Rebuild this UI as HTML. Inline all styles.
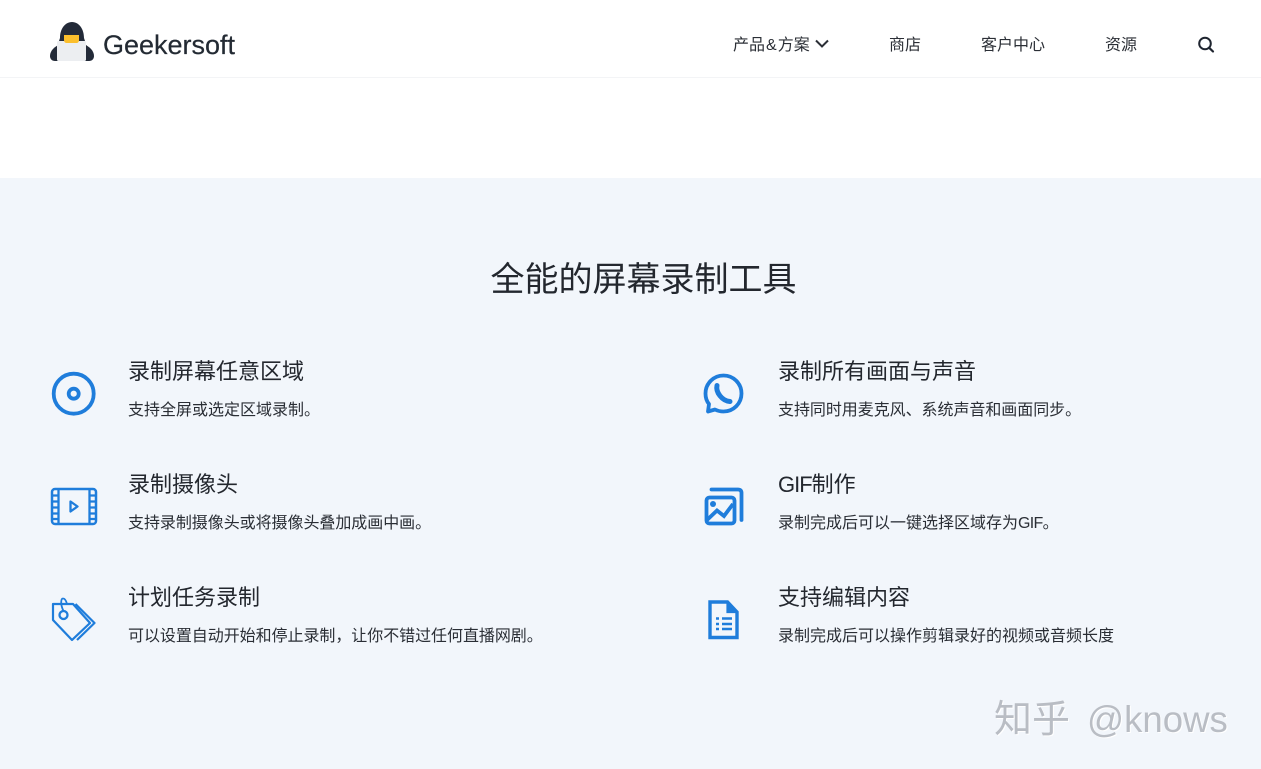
<!DOCTYPE html>
<html lang="zh-CN">
<head>
<meta charset="utf-8">
<title>Geekersoft</title>
<style>
html,body{margin:0;padding:0;background:#fff}
#p{position:relative;width:1261px;height:769px;overflow:hidden;background:#fff;font-family:"Liberation Sans","Noto Sans CJK SC",sans-serif;color:#222730}
.t{position:absolute;white-space:nowrap;line-height:1}
.h{position:absolute;left:0;top:77px;width:1261px;height:1px;background:#f3f4f6}
.bg{position:absolute;left:0;top:178px;width:1261px;height:591px;background:#f2f6fb}
.n{font-size:16px;color:#2b2f36;top:38px}
.a{font-size:22px;color:#23272e}
.d{font-size:16px;color:#2a2e35}
.g{letter-spacing:-.7px}
svg{position:absolute;left:0;top:0}
</style>
</head>
<body>
<div id="p">
<div class="h"></div>
<div class="bg"></div>

<div class="t" style="left:103px;top:32px;font-size:27px;color:#232a33;-webkit-text-stroke:.2px #232a33">Geekersoft</div>
<div class="t n" style="left:733px">产品<span style="padding:0 1px">&amp;</span>方案</div>
<div class="t n" style="left:889px">商店</div>
<div class="t n" style="left:981px">客户中心</div>
<div class="t n" style="left:1105px">资源</div>

<div class="t" style="left:490.5px;top:263px;font-size:34px;color:#23272e">全能的屏幕录制工具</div>

<div class="t a" style="left:128px;top:361px">录制屏幕任意区域</div>
<div class="t d" style="left:128px;top:403px">支持全屏或选定区域录制。</div>
<div class="t a" style="left:128px;top:474px">录制摄像头</div>
<div class="t d" style="left:128px;top:516px;letter-spacing:-.05px">支持录制摄像头或将摄像头叠加成画中画。</div>
<div class="t a" style="left:128px;top:587px">计划任务录制</div>
<div class="t d" style="left:128px;top:629px;letter-spacing:-.05px">可以设置自动开始和停止录制，让你不错过任何直播网剧。</div>

<div class="t a" style="left:778px;top:361px">录制所有画面与声音</div>
<div class="t d" style="left:778px;top:403px;letter-spacing:-.05px">支持同时用麦克风、系统声音和画面同步。</div>
<div class="t a" style="left:778px;top:474px"><span style="letter-spacing:-1px">GIF</span>制作</div>
<div class="t d" style="left:778px;top:516px">录制完成后可以一键选择区域存为<span class="g">GIF</span>。</div>
<div class="t a" style="left:778px;top:587px">支持编辑内容</div>
<div class="t d" style="left:778px;top:629px">录制完成后可以操作剪辑录好的视频或音频长度</div>

<div class="t" style="left:994px;top:701px;font-size:38px;color:#b9bdc4;text-shadow:1px 1px 0 #fff">知乎</div>
<div class="t" style="left:1087px;top:702px;font-size:36.6px;color:#b9bdc4;text-shadow:1px 1px 0 #fff">@knows</div>

<svg width="1261" height="769" viewBox="0 0 1261 769" fill="none">
  <!-- logo -->
  <path d="M50 56C50 51 54 47 60 44L84 44C90 47 94 51 94 56C94 59 92 61 89 61H55C52 61 50 59 50 56Z" fill="#232a38"/>
  <path d="M60 38C60 29 65 22 72 22C79 22 84 29 84 38L85 41H59Z" fill="#232a38"/>
  <rect x="57" y="41" width="29" height="20" rx="1.500" fill="#eceef1"/>
  <path d="M64 35H79V40C79 42 78 43 76 43H67C65 43 64 42 64 40Z" fill="#fbbf2d"/>
  <!-- nav chevron and search -->
  <path d="M816 40.500L822 46.500L828 40.500" stroke="#2b2f36" stroke-width="2"/>
  <circle cx="1205" cy="43.500" r="5.800" stroke="#1f2530" stroke-width="2"/>
  <path d="M1209.200 47.800L1213 51.500" stroke="#1f2530" stroke-width="2.200" stroke-linecap="round"/>

  <g stroke="#1f7ddb">
    <!-- disc -->
    <circle cx="73.700" cy="393.700" r="20" stroke-width="3.800"/>
    <circle cx="73.700" cy="393.700" r="5" stroke-width="3.800"/>
    <!-- film -->
    <rect x="52" y="489" width="44" height="35" rx="3" stroke-width="2.500"/>
    <path d="M58.500 489V524M89.500 489V524M52 495.500H58.500M52 501.500H58.500M52 507.500H58.500M52 513.500H58.500M52 519H58.500M89.500 495.500H96M89.500 501.500H96M89.500 507.500H96M89.500 513.500H96M89.500 519H96" stroke-width="2.300"/>
    <path d="M70.500 501.500L77.500 506.500L70.500 511.500Z" stroke-width="2.300" stroke-linejoin="round"/>
    <!-- tag -->
    <path d="M53 604H73L90 623L72 640L53 620Z" stroke-width="2.200" stroke-linejoin="round"/>
    <path d="M75.500 604L94.500 623L77 640" stroke-width="2.200" stroke-linejoin="round"/>
    <circle cx="63.500" cy="615" r="4" stroke-width="2.300"/>
    <path d="M63.500 611C60 604 61 598.500 63 598.500C65.500 598.500 66.500 602 67 604" stroke-width="1.800"/>
    <!-- whatsapp bubble -->
    <path d="M708 411.500L709 404C706 400.500 705.500 397 705.500 393.500C705.500 383.500 713.500 375.500 723.500 375.500C733.500 375.500 741.500 383.500 741.500 393.500C741.500 403.500 733.500 411.500 723.500 411.500C720.500 411.500 717.500 410.800 715 409.500Z" stroke-width="3.800" stroke-linejoin="round"/>
    <path d="M717 385.500C715.500 392 722 401 730 401.500" stroke-width="5" stroke-linecap="round"/>
    <!-- image -->
    <rect x="706.500" y="497.500" width="28" height="26" rx="3" stroke-width="3.800"/>
    <path d="M711.500 489.500H738C740.300 489.500 741.500 490.700 741.500 493V520" stroke-width="3.800" stroke-linecap="round"/>
    <path d="M707 520L717 510.500L724 516L733 504" stroke-width="3.800"/>
    <!-- doc -->
    <path d="M710 602H727.500L737 612V637.500H710Z" stroke-width="3.400"/>
    <path d="M727.500 602V612H737" stroke-width="2.200"/>
    <path d="M716 618.500H719M716 624H719M716 629H719M722 618.500H732M722 624H732M722 629H732" stroke-width="2.600"/>
  </g>
  <circle cx="713" cy="504" r="3" fill="#1f7ddb"/>
  <path d="M727.500 603L736 612H727.500Z" fill="#1f7ddb"/>
</svg>
</div>
</body>
</html>
